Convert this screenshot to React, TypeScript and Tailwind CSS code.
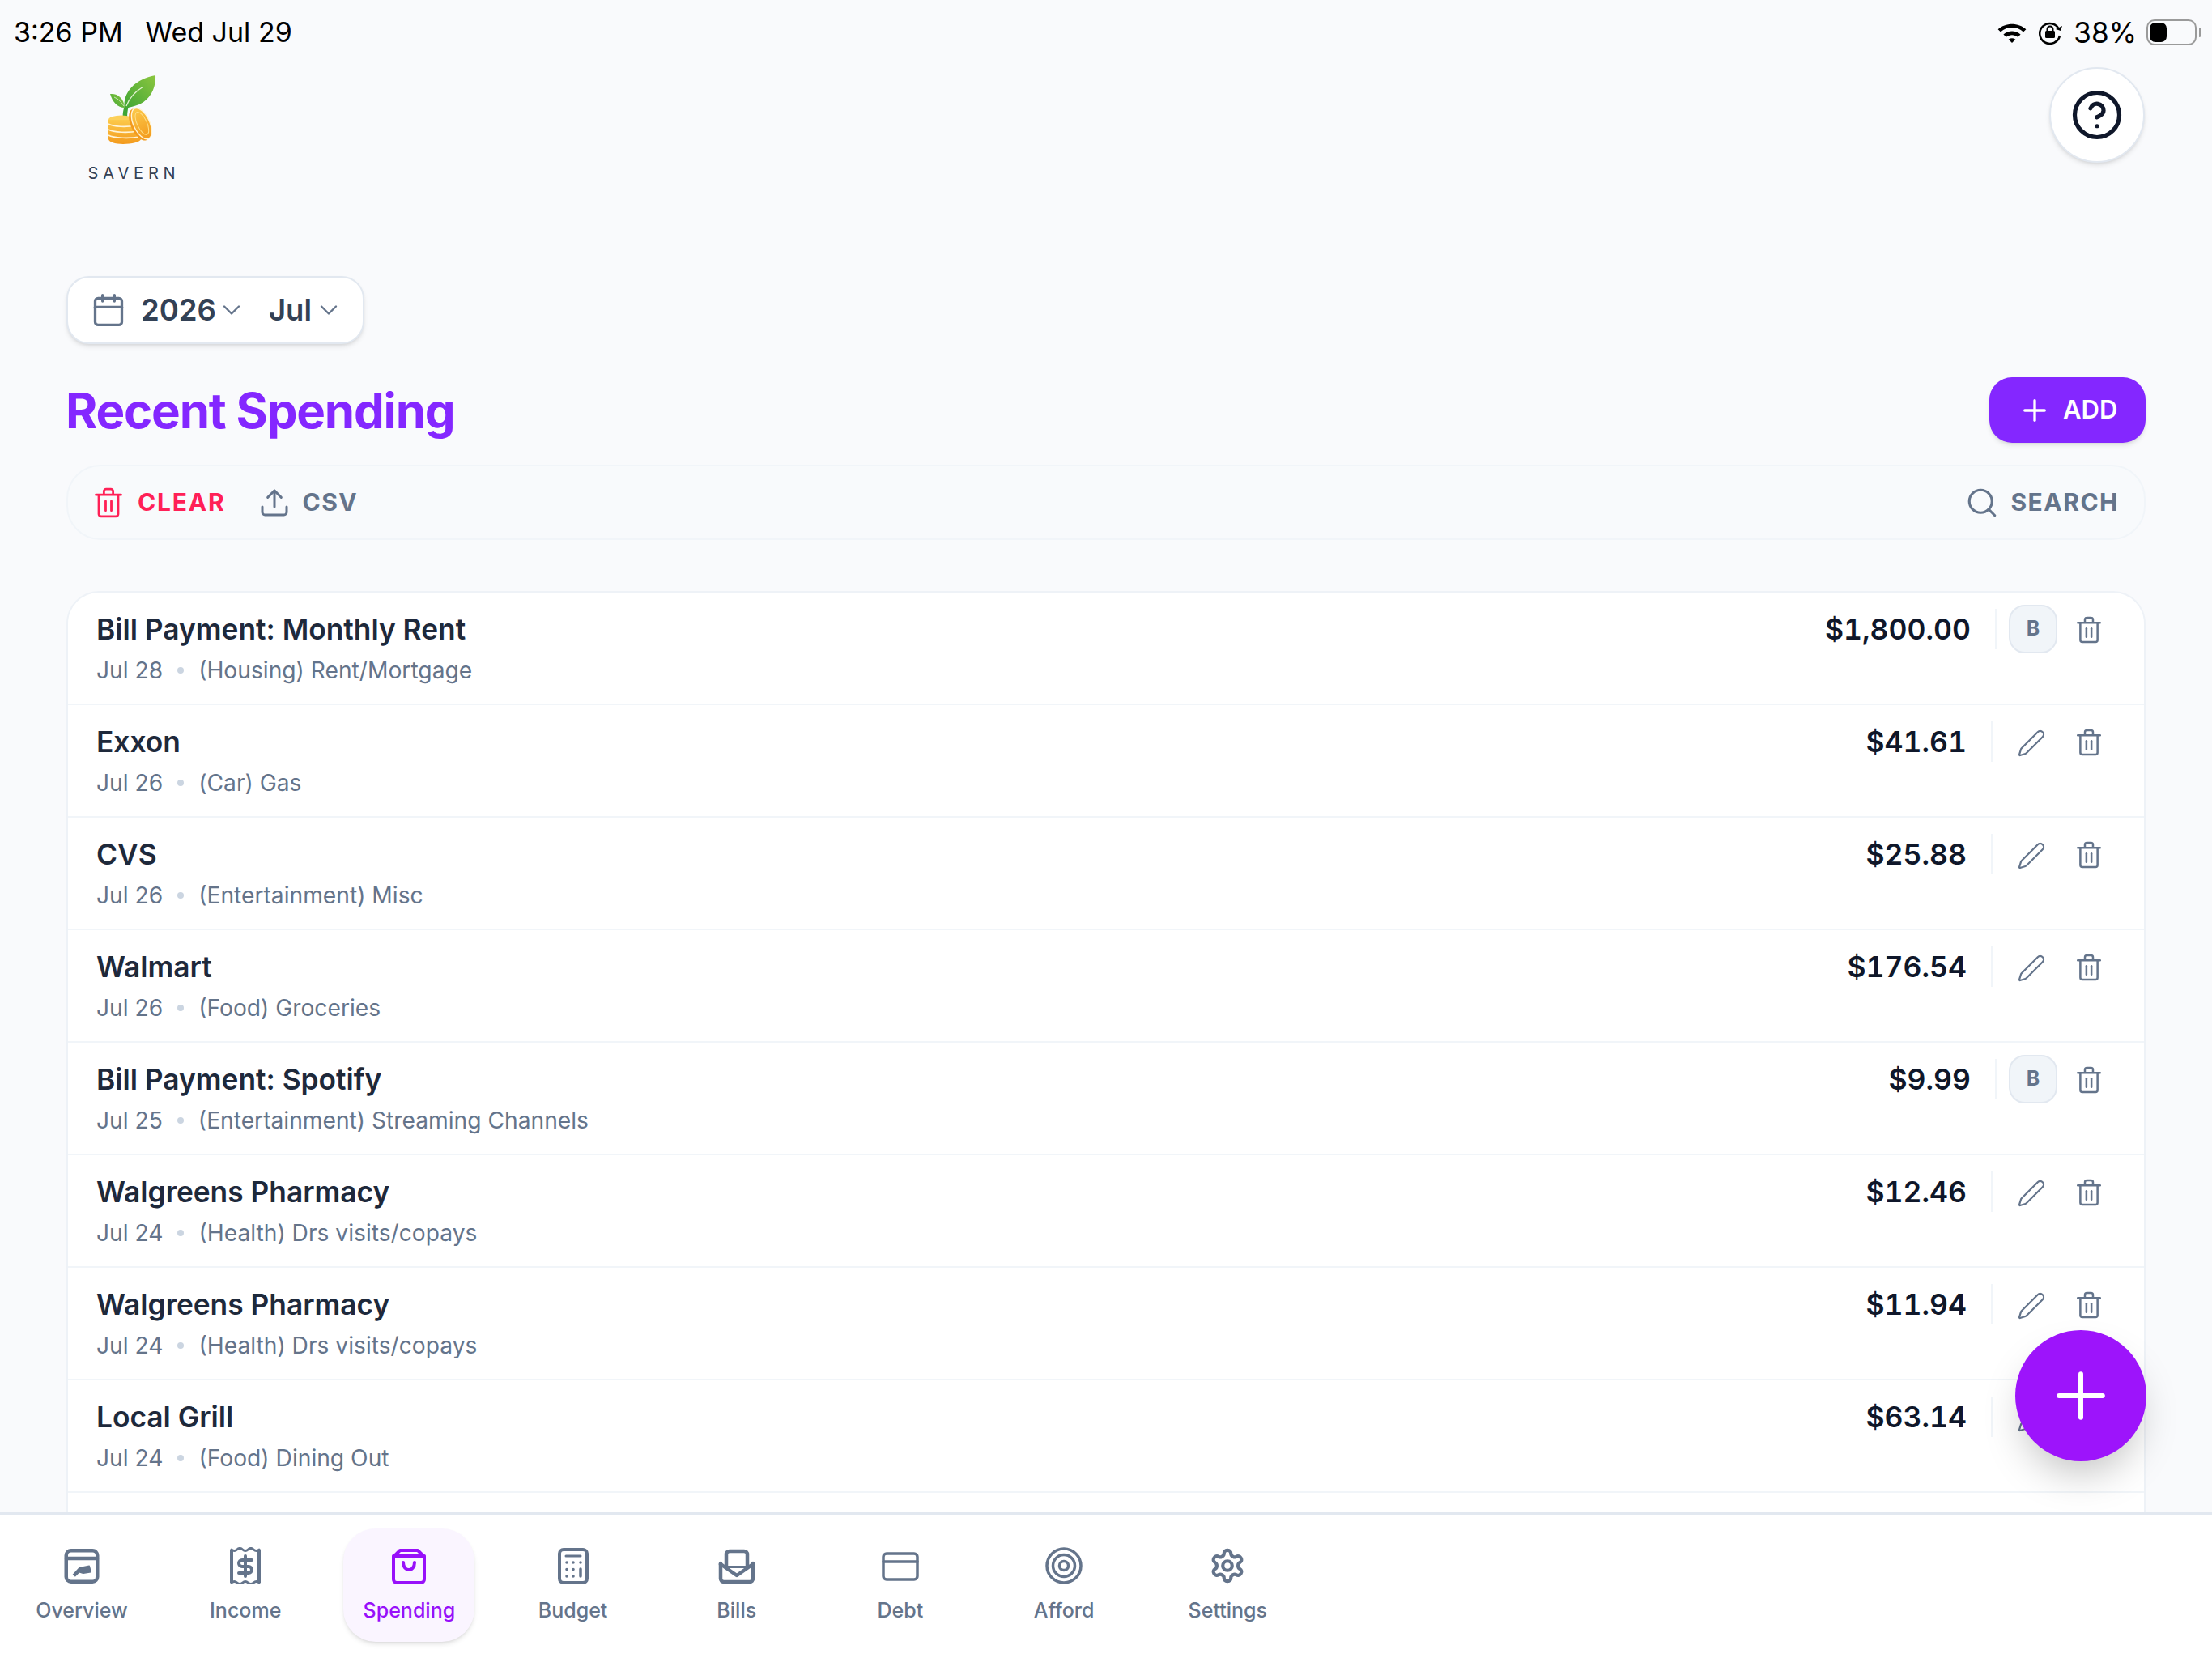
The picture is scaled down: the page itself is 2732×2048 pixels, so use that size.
import React from "react";
import {
  Calendar,
  ChevronDown,
  CircleHelp,
  Pen,
  Plus,
  Search,
  Upload,
} from "lucide-react";

const rows = [
  { title: "Bill Payment: Monthly Rent", date: "Jul 28", cat: "(Housing) Rent/Mortgage", amount: "$1,800.00", bill: true },
  { title: "Exxon", date: "Jul 26", cat: "(Car) Gas", amount: "$41.61" },
  { title: "CVS", date: "Jul 26", cat: "(Entertainment) Misc", amount: "$25.88" },
  { title: "Walmart", date: "Jul 26", cat: "(Food) Groceries", amount: "$176.54" },
  { title: "Bill Payment: Spotify", date: "Jul 25", cat: "(Entertainment) Streaming Channels", amount: "$9.99", bill: true },
  { title: "Walgreens Pharmacy", date: "Jul 24", cat: "(Health) Drs visits/copays", amount: "$12.46" },
  { title: "Walgreens Pharmacy", date: "Jul 24", cat: "(Health) Drs visits/copays", amount: "$11.94" },
  { title: "Local Grill", date: "Jul 24", cat: "(Food) Dining Out", amount: "$63.14" },
  { title: "", date: "", cat: "", amount: "" },
];

function TrashIcon({ className }: { className?: string }) {
  return (
    <svg viewBox="0 0 24 27" fill="none" stroke="currentColor" strokeWidth="2" strokeLinecap="round" strokeLinejoin="round" className={className}>
      <path d="M1 6.5h22" />
      <path d="M8 6V3.5A2 2 0 0 1 10 1.5h4a2 2 0 0 1 2 2V6" />
      <path d="M3.5 7v16.5a2 2 0 0 0 2 2h13a2 2 0 0 0 2-2V7" />
      <path d="M9.5 12v8.5" />
      <path d="M14.5 12v8.5" />
    </svg>
  );
}

function Logo() {
  return (
    <svg viewBox="0 0 60 86" className="h-[86px] w-[60px]">
      <defs>
        <linearGradient id="leaf" x1="0" y1="1" x2="1" y2="0">
          <stop offset="0" stopColor="#3fa535" />
          <stop offset="1" stopColor="#8cc63f" />
        </linearGradient>
        <linearGradient id="coin" x1="0" y1="0" x2="0" y2="1">
          <stop offset="0" stopColor="#fcc94a" />
          <stop offset="1" stopColor="#f39a1d" />
        </linearGradient>
      </defs>
      <path d="M19 56C18 48 19 42 22 36L26 38C24 44 24 50 24 56Z" fill="#3fa535" />
      <path d="M21 40C18 22 34 4 59 0C60 18 50 34 33 38C28 39.500 24 40 21 42Z" fill="url(#leaf)" />
      <path d="M23 38C27 27 34 20 44 14" stroke="#e4f3d4" strokeWidth="1.200" fill="none" />
      <path d="M3 23C12 22 20 28 21 40C12 40 6 33 3 23Z" fill="url(#leaf)" />
      <path d="M8 27C13 29 17 33 20 38" stroke="#e4f3d4" strokeWidth="0.800" fill="none" />
      <ellipse cx="17" cy="55" rx="16" ry="5.500" fill="#fcd05a" />
      <path d="M1 55v24c0 3 8 6 18 6s22-3 22-6V55Z" fill="url(#coin)" />
      <path d="M1 60c6 4 24 4 32 2M1 67c6 4 26 4 36 2M1 74c6 4 28 4 38 2" stroke="#fff4d6" strokeWidth="1.600" fill="none" />
      <g transform="rotate(-25 41 60)">
        <ellipse cx="39" cy="60" rx="10.500" ry="21" fill="#f39a1d" />
        <ellipse cx="42" cy="60" rx="10" ry="20.500" fill="url(#coin)" stroke="#fff4d6" strokeWidth="1.400" />
        <ellipse cx="42.500" cy="60" rx="6" ry="15" fill="none" stroke="#fde08c" strokeWidth="1" />
      </g>
    </svg>
  );
}

function NavIcon({ name }: { name: string }) {
  const props = {
    viewBox: "0 0 46 46",
    fill: "none",
    stroke: "currentColor",
    strokeWidth: 4,
    strokeLinecap: "round" as const,
    strokeLinejoin: "round" as const,
    className: "h-[46px] w-[46px]",
  };
  if (name === "Overview")
    return (
      <svg {...props} strokeWidth={4.500}>
        <rect x="3.750" y="4.250" width="38.500" height="38.500" rx="6" />
        <path d="M4 14h38" />
        <path d="M12.500 34L20 25.700L32.200 23.300L34.200 30.700L24.800 32.300L19.800 30.700L14.800 35.700Z" fill="currentColor" strokeWidth="1.500" />
      </svg>
    );
  if (name === "Income")
    return (
      <svg {...props}>
        <path d="M6 3q3.400 3 6.800 0t6.800 0t6.800 0t6.800 0t6.800 0" strokeWidth="3" />
        <path d="M6 44q3.400-3 6.800 0t6.800 0t6.800 0t6.800 0t6.800 0" strokeWidth="3" />
        <path d="M6 3v41M40 3v41" strokeLinecap="butt" />
        <path d="M31 16H19a4 4 0 0 0 0 8h8a4 4 0 0 1 0 8H15" />
        <path d="M23 11v25" />
      </svg>
    );
  if (name === "Spending")
    return (
      <svg {...props}>
        <path d="M12 4h22l8 8v28a4 4 0 0 1-4 4H8a4 4 0 0 1-4-4V12z" />
        <path d="M4 11h38" />
        <path d="M16 19c0 12 14 12 14 0" />
      </svg>
    );
  if (name === "Budget")
    return (
      <svg {...props}>
        <rect x="6" y="3" width="34" height="41" rx="5" />
        <path d="M14 11h18" strokeWidth="3" />
        <path d="M15 19h.01M23 19h.01M32 19h.01M15 27.500h.01M23 27.500h.01M15 36h.01M23 36h.01" strokeWidth="3.600" />
        <path d="M32 27v9" strokeWidth="3.500" />
      </svg>
    );
  if (name === "Bills")
    return (
      <svg {...props} strokeWidth={4.500}>
        <path d="M3 20v19a4 4 0 0 0 4 4h32a4 4 0 0 0 4-4V20" />
        <path d="M3 21l20 14 20-14" />
        <path d="M10 24V9a4 4 0 0 1 4-4h18a4 4 0 0 1 4 4v15" />
        <path d="M10 24.500h26" strokeWidth="3" />
      </svg>
    );
  if (name === "Debt")
    return (
      <svg {...props} strokeWidth={3.500}>
        <rect x="2" y="8" width="42" height="32" rx="4" />
        <path d="M2 18h42" />
      </svg>
    );
  if (name === "Afford")
    return (
      <svg {...props} strokeWidth={3.500}>
        <circle cx="23" cy="23" r="21" />
        <circle cx="23" cy="23" r="13.500" />
        <circle cx="23" cy="23" r="5.500" />
      </svg>
    );
  return (
    <svg {...props} viewBox="0 0 24 24" strokeWidth={2.200}>
      <path d="M12.220 2h-.44a2 2 0 0 0-2 2v.18a2 2 0 0 1-1 1.730l-.43.25a2 2 0 0 1-2 0l-.15-.08a2 2 0 0 0-2.730.73l-.22.38a2 2 0 0 0 .73 2.730l.15.1a2 2 0 0 1 1 1.720v.51a2 2 0 0 1-1 1.740l-.15.09a2 2 0 0 0-.73 2.730l.22.38a2 2 0 0 0 2.730.73l.15-.08a2 2 0 0 1 2 0l.43.25a2 2 0 0 1 1 1.730V20a2 2 0 0 0 2 2h.44a2 2 0 0 0 2-2v-.18a2 2 0 0 1 1-1.730l.43-.25a2 2 0 0 1 2 0l.15.08a2 2 0 0 0 2.730-.73l.22-.39a2 2 0 0 0-.73-2.730l-.15-.08a2 2 0 0 1-1-1.740v-.5a2 2 0 0 1 1-1.740l.15-.09a2 2 0 0 0 .73-2.730l-.22-.38a2 2 0 0 0-2.730-.73l-.15.08a2 2 0 0 1-2 0l-.43-.25a2 2 0 0 1-1-1.730V4a2 2 0 0 0-2-2z" />
      <circle cx="12" cy="12" r="3" />
    </svg>
  );
}

function StatusBar() {
  return (
    <div className="flex h-[60px] items-end justify-between pl-[17px] pr-[13px] text-[34px] leading-[40px] text-black">
      <div className="flex gap-[28px]">
        <span>3:26 PM</span>
        <span>Wed Jul 29</span>
      </div>
      <div className="flex items-center">
        <svg viewBox="0 0 38 28" className="h-[27px] w-[38px]">
          <path d="M1 9.500C10.500 .5 27.500 .5 37 9.500L33.500 13C25.500 5.500 12.500 5.500 4.500 13Z" />
          <path d="M8 16C14.500 10.500 23.500 10.500 30 16L26.500 19.500C22 16 16 16 11.500 19.500Z" />
          <path d="M14.500 22.500C17.500 20.500 20.500 20.500 23.500 22.500L19 27Z" />
        </svg>
        <svg viewBox="0 0 30 30" fill="none" stroke="black" strokeWidth="2.500" className="ml-[13px] h-[30px] w-[30px]">
          <path d="M26 11A12.500 12.500 0 1 0 27 19" />
          <path d="M22 11l6 2 2-6" fill="black" stroke="none" />
          <rect x="9" y="13" width="12" height="9" rx="1.500" fill="black" stroke="none" />
          <path d="M11.500 13v-2a3.500 3.500 0 0 1 7 0v2" strokeWidth="2" />
        </svg>
        <span className="ml-[14px] text-[35px]">38%</span>
        <div className="ml-[12px] flex h-[32px] w-[62px] items-center rounded-[10px] border-2 border-[#9a9a9a] p-[2px]">
          <div className="h-full w-[21px] rounded-[7px] bg-black" />
        </div>
        <div className="ml-[3px] h-[12px] w-[3px] rounded-r-full bg-[#9a9a9a]" />
      </div>
    </div>
  );
}

function Row({ row }: { row: (typeof rows)[number] }) {
  return (
    <div className="flex h-[139px] shrink-0 items-start justify-between border-b-2 border-[#f1f5f9] pl-[35px] pr-[53px]">
      <div className="min-w-0">
        <div className="mt-[26px] h-[40px] text-[35.300px] leading-[40px] font-semibold text-[#1e293b]">{row.title}</div>
        {row.title && (
          <div className="mt-[12px] flex items-center text-[28.200px] leading-[36px] text-[#64748b]">
            <span>{row.date}</span>
            <span className="mx-[18px] h-[8px] w-[8px] rounded-full bg-[#cbd5e1]" />
            <span>{row.cat}</span>
          </div>
        )}
      </div>
      {row.title && (
        <div className="flex items-start">
          <div className="mt-[25px] mr-[30px] text-[35.500px] leading-[42px] font-semibold text-[#0f172a] tabular-nums">{row.amount}</div>
          <div className="mt-[20px] h-[50px] w-[2px] bg-[#f1f5f9]" />
          {row.bill ? (
            <div className="mt-[15px] ml-[15px] flex h-[60px] w-[60px] items-center justify-center rounded-[20px] border-2 border-[#e2e8f0] bg-[#f1f5f9] text-[25px] font-bold text-[#64748b]">B</div>
          ) : (
            <Pen className="mt-[29px] ml-[30px] h-[36px] w-[36px] text-[#64748b]" strokeWidth={1.5} />
          )}
          <TrashIcon className={`mt-[29px] h-[34px] w-[30px] text-[#64748b] ${row.bill ? "ml-[24px]" : "ml-[38px]"}`} />
        </div>
      )}
    </div>
  );
}

export default function App() {
  return (
    <div className="relative flex h-[2048px] w-[2732px] flex-col overflow-hidden bg-[#f9fafc] font-['Inter',sans-serif]">
      <StatusBar />
      <main className="flex min-h-0 flex-1 flex-col px-[82px]">
        <div className="flex items-start justify-between">
          <div className="ml-[27px] mt-[33px] flex w-[107px] flex-col items-center">
            <Logo />
            <div className="mt-[23px] pl-[6px] text-[20px] leading-[24px] tracking-[0.29em] text-[#334155]">SAVERN</div>
          </div>
          <button className="mt-[23px] flex h-[118px] w-[118px] -translate-x-[1px] items-center justify-center rounded-full border-2 border-[#e2e8f0] bg-white shadow-md">
            <CircleHelp className="h-[66px] w-[66px] text-[#0f172a]" strokeWidth={1.9} />
          </button>
        </div>
        <div className="mt-[115px] flex h-[84px] w-[368px] items-center rounded-[28px] border-2 border-[#e2e8f0] bg-white pl-[28px] shadow-md">
          <Calendar className="h-[44px] w-[44px] shrink-0 text-[#64748b]" strokeWidth={1.8} />
          <span className="ml-[18px] text-[36.500px] font-semibold text-[#334155]">2026</span>
          <ChevronDown className="ml-[1px] h-[36px] w-[36px] shrink-0 text-[#64748b]" strokeWidth={1.6} />
          <span className="ml-[28px] text-[36.500px] font-semibold text-[#334155]">Jul</span>
          <ChevronDown className="ml-[3px] h-[36px] w-[36px] shrink-0 text-[#64748b]" strokeWidth={1.6} />
        </div>
        <div className="mt-[41px] flex h-[81px] items-center justify-between">
          <h1 className="-ml-[1px] text-[60px] font-bold tracking-[-0.02em] text-[#8427ff]">Recent Spending</h1>
          <button className="flex h-[81px] w-[193px] items-center rounded-[28px] bg-[#8427ff] pl-[35px] text-[31px] font-semibold text-white shadow-md">
            <Plus className="h-[42px] w-[42px]" strokeWidth={1.9} />
            <span className="ml-[14px]">ADD</span>
          </button>
        </div>
        <div className="mt-[27px] flex h-[93px] items-center justify-between rounded-[42px] border-2 border-[#f1f5f9] bg-[#f8fafc] pl-[33px] pr-[31px]">
          <div className="flex items-center">
            <TrashIcon className="h-[38px] w-[34px] text-[#ff2056]" />
            <span className="ml-[19px] text-[30px] font-bold tracking-[0.06em] text-[#ff2056]">CLEAR</span>
            <Upload className="ml-[41px] h-[40px] w-[40px] text-[#64748b]" strokeWidth={1.8} />
            <span className="ml-[14px] text-[30px] font-bold tracking-[0.05em] text-[#64748b]">CSV</span>
          </div>
          <div className="flex items-center">
            <Search className="h-[42px] w-[42px] text-[#64748b]" strokeWidth={1.8} />
            <span className="ml-[14px] text-[30px] font-bold tracking-[0.05em] text-[#64748b]">SEARCH</span>
          </div>
        </div>
        <div className="mt-[63px] flex min-h-0 flex-1 flex-col overflow-hidden rounded-t-[40px] border-x-2 border-t-2 border-[#eef2f7] bg-white">
          {rows.map((r, i) => (
            <Row key={i} row={r} />
          ))}
        </div>
      </main>
      <nav className="flex h-[180px] shrink-0 gap-[40.200px] border-t-[3px] border-[#e2e8f0] bg-white pl-[20px] pt-[17px]">
        {["Overview", "Income", "Spending", "Budget", "Bills", "Debt", "Afford", "Settings"].map((n) => (
          <div
            key={n}
            className={`flex h-[140px] w-[162px] flex-col items-center rounded-[40px] pt-[23px] ${n === "Spending" ? "bg-[#faf5ff] text-[#9810fa] shadow-md" : "text-[#64748b]"}`}
          >
            <NavIcon name={n} />
            <span className="mt-[16px] text-[25px] leading-[32px] font-medium">{n}</span>
          </div>
        ))}
      </nav>
      <button className="absolute left-[2489px] top-[1643px] flex h-[162px] w-[162px] items-center justify-center rounded-full bg-[#9d14fb] text-white shadow-2xl">
        <Plus className="h-[92px] w-[92px]" strokeWidth={1.56} />
      </button>
    </div>
  );
}
